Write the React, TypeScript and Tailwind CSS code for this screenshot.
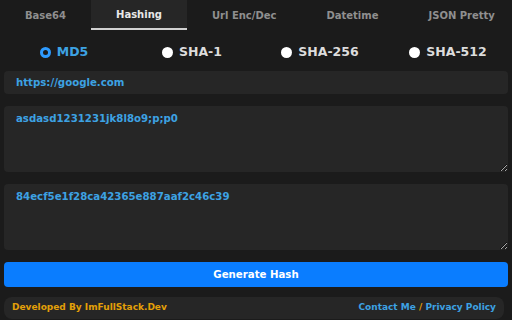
import React from "react";

const tabs = ["Base64", "Hashing", "Url Enc/Dec", "Datetime", "JSON Pretty"];
const algos = ["MD5", "SHA-1", "SHA-256", "SHA-512"];

const App = () => {
  const font = { fontFamily: '"DejaVu Sans", "Noto Sans", sans-serif' };
  const box = "block w-full rounded bg-[#262626] px-3 text-[10.2px] font-bold text-[#3da2e3] outline-none";
  return (
    <div className="h-[320px] w-[512px] overflow-hidden bg-[#1b1b1b]" style={font}>
      <div className="flex h-[30px] overflow-hidden">
        {tabs.map((t) => (
          <div
            key={t}
            className={
              t === "Hashing"
                ? "flex h-full shrink-0 items-center whitespace-nowrap border-b-2 border-[#d0d0d0] bg-[#262626] px-[25px] text-[10px] font-bold text-[#e8e8e8]"
                : "flex h-full shrink-0 items-center whitespace-nowrap px-[25px] text-[10px] font-bold text-[#8f8f8f]"
            }
          >
            {t}
          </div>
        ))}
      </div>
      <div className="grid h-[41px] grid-cols-4 items-center pt-1">
        {algos.map((a) => (
          <div key={a} className="flex items-center justify-center gap-[6px]">
            {a === "MD5" ? (
              <span className="flex h-[11px] w-[11px] items-center justify-center rounded-full bg-[#2e9bff]">
                <span className="h-[5px] w-[5px] rounded-full bg-[#1b1b1b]" />
              </span>
            ) : (
              <span className="h-[11px] w-[11px] rounded-full bg-white" />
            )}
            <span className={a === "MD5" ? "text-[12.5px] font-bold text-[#3da2e3]" : "text-[12.5px] font-bold text-[#dcdcdc]"}>
              {a}
            </span>
          </div>
        ))}
      </div>
      <div className="flex flex-col gap-3 px-1">
        <input readOnly value="https://google.com" className={box + " h-[23px]"} style={font} />
        <textarea readOnly value="asdasd1231231jk8l8o9;p;p0" className={box + " h-[66px] resize-y py-[5px]"} style={font} />
        <textarea readOnly value="84ecf5e1f28ca42365e887aaf2c46c39" className={box + " h-[66px] resize-y py-[5px]"} style={font} />
        <button className="h-[25px] w-full rounded bg-[#0a7dff] text-[10.2px] font-bold text-white">Generate Hash</button>
        <div className="mr-1 mt-[-2px] flex h-[22px] items-center justify-between rounded-lg bg-[#262626] px-2 text-[9px] font-bold">
          <span className="text-[#e3a008]">Developed By ImFullStack.Dev</span>
          <span className="text-[#3da2e3]">
            Contact Me <span className="text-[#e3a008]">/</span> Privacy Policy
          </span>
        </div>
      </div>
    </div>
  );
};

export default App;
